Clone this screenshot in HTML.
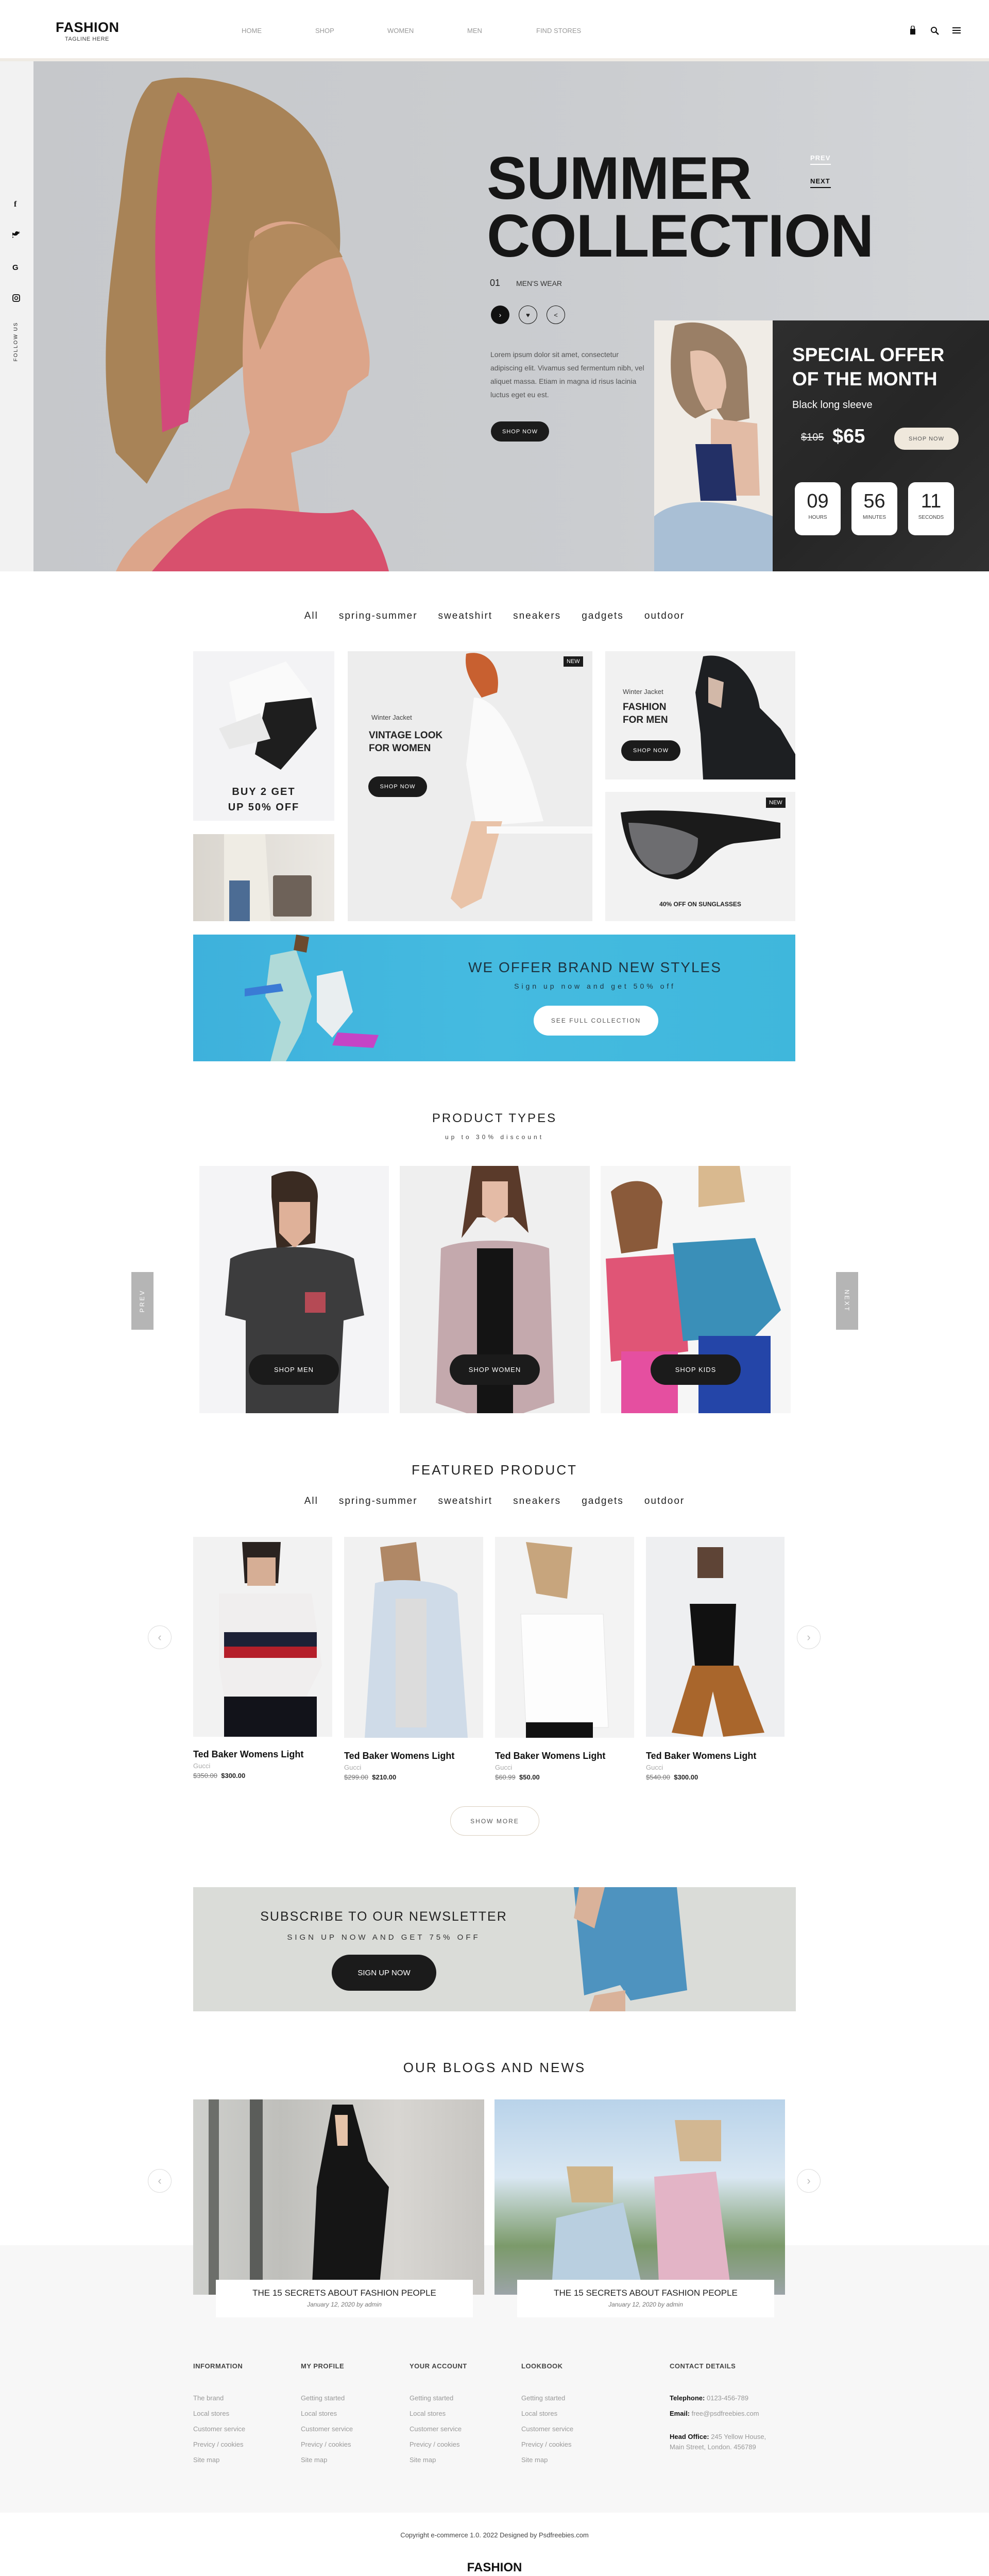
<!DOCTYPE html>
<html><head><meta charset="utf-8"><style>
*{margin:0;padding:0;box-sizing:border-box}
body{width:1920px;height:5050px;position:relative;background:#fff;font-family:"Liberation Sans",sans-serif;color:#222;overflow:hidden}
.a{position:absolute}
.c{text-align:center}
.btn{position:absolute;background:#1b1b1b;color:#fff;border-radius:22px;font-size:11px;letter-spacing:1px;display:flex;align-items:center;justify-content:center}
.tabs{position:absolute;left:0;width:1920px;display:flex;justify-content:center;gap:40px;font-size:19px;letter-spacing:2px;color:#222}
.h2{position:absolute;left:0;width:1920px;text-align:center;font-size:26px;letter-spacing:3px;color:#222}
.lnk{font-size:13px;color:#999;line-height:30px}
.fh{font-size:13px;font-weight:bold;color:#444;letter-spacing:.5px}
.new{position:absolute;background:#1b1b1b;color:#fff;font-size:11px;padding:4px 6px}
.ptitle{font-size:18px;font-weight:bold;color:#111}
.circ{position:absolute;width:46px;height:46px;border:1.5px solid #ddd;border-radius:50%;color:#bbb;font-size:22px;display:flex;align-items:center;justify-content:center}
</style></head><body>

<!-- header -->
<div class="a" style="left:108px;top:38px;font-size:27px;font-weight:bold;letter-spacing:.5px;color:#111">FASHION</div>
<div class="a" style="left:126px;top:70px;font-size:11px;color:#444;letter-spacing:.5px">TAGLINE HERE</div>
<div class="a" style="left:469px;top:52px;font-size:13px;color:#999">HOME</div>
<div class="a" style="left:612px;top:52px;font-size:13px;color:#999">SHOP</div>
<div class="a" style="left:752px;top:52px;font-size:13px;color:#999">WOMEN</div>
<div class="a" style="left:907px;top:52px;font-size:13px;color:#999">MEN</div>
<div class="a" style="left:1041px;top:52px;font-size:13px;color:#999">FIND STORES</div>
<svg class="a" style="left:1764px;top:50px" width="16" height="18"><path d="M3 6h10v11H3z" fill="#111"/><path d="M5 6V3a3 3 0 0 1 6 0v3" stroke="#111" fill="none" stroke-width="1.5"/></svg>
<svg class="a" style="left:1806px;top:51px" width="18" height="18"><circle cx="7" cy="7" r="5" stroke="#111" stroke-width="2" fill="none"/><path d="M11 11l5 5" stroke="#111" stroke-width="2.5"/></svg>
<svg class="a" style="left:1849px;top:52px" width="18" height="14"><path d="M0 2h16M0 7h16M0 12h16" stroke="#111" stroke-width="2"/></svg>
<div class="a" style="left:0;top:113px;width:1920px;height:6px;background:#efebe4"></div>

<!-- hero -->
<div class="a" style="left:0;top:119px;width:65px;height:990px;background:#f2f2f2"></div>
<div class="a" style="left:65px;top:119px;width:1855px;height:990px;background:linear-gradient(90deg,#c6c8cb,#cbcdd0 60%,#d3d5d8)"></div>
<svg class="a" style="left:65px;top:119px" width="900" height="990">
<path d="M230 40 C330 10 520 60 570 200 C610 320 600 420 560 470 L470 540 L300 680 L220 820 L160 760 C120 600 150 420 170 260 C180 160 190 80 230 40Z" fill="#a88357"/>
<path d="M280 60 C330 90 360 200 340 320 L300 700 L250 720 L240 500 C230 300 240 150 280 60Z" fill="#d2497b"/>
<path d="M430 330 C500 280 600 330 620 440 C640 520 660 560 650 610 L610 640 C600 680 590 720 560 740 L500 760 L520 900 C560 960 580 990 580 990 L160 990 C200 900 300 860 380 830 L420 720 C400 620 400 500 430 330Z" fill="#dca58a"/>
<path d="M420 350 C470 300 560 300 600 380 C560 380 500 420 470 500 L440 560 C420 480 410 420 420 350Z" fill="#b38a5e"/>
<path d="M380 870 C460 860 560 890 620 870 C660 900 680 950 690 990 L230 990 C280 930 330 880 380 870Z" fill="#d8506d"/>
</svg>
<svg class="a" style="left:24px;top:386px" width="16" height="210"><text x="3" y="15" font-size="16" font-weight="bold" fill="#111" font-family="Liberation Serif">f</text><path d="M1 70c4 2 8 2 10-2 2 0 3-2 4-3-1 0-2 1-3 1 1-1 2-2 2-3-1 1-2 1-3 1-2-2-6-1-6 3-3 0-6-2-8-4-1 2 0 4 1 5h-2c0 2 1 3 3 4H-1c1 2 3 2 4 2-1 1-3 2-4 2z" fill="#111"/><text x="0" y="138" font-size="15" font-weight="bold" fill="#111">G</text><rect x="1" y="186" width="13" height="13" rx="3" fill="none" stroke="#111" stroke-width="1.8"/><circle cx="7.5" cy="192.5" r="3" fill="none" stroke="#111" stroke-width="1.6"/></svg>
<div class="a" style="left:31px;top:663px;transform:translate(-50%,-50%) rotate(-90deg);font-size:10px;letter-spacing:2px;color:#222;white-space:nowrap">FOLLOW US</div>

<div class="a" style="left:945px;top:290px;font-size:117px;font-weight:bold;color:#161616;line-height:112px;letter-spacing:-1px">SUMMER<br>COLLECTION</div>
<div class="a" style="left:1573px;top:299px;font-size:13px;font-weight:bold;color:#fff;letter-spacing:1px">PREV</div>
<div class="a" style="left:1573px;top:318px;width:40px;height:2px;background:#fff"></div>
<div class="a" style="left:1573px;top:344px;font-size:13px;font-weight:bold;color:#111;letter-spacing:1px">NEXT</div>
<div class="a" style="left:1573px;top:363px;width:40px;height:2px;background:#111"></div>
<div class="a" style="left:951px;top:539px;font-size:18px;color:#222">01</div>
<div class="a" style="left:1002px;top:542px;font-size:14px;color:#333">MEN'S WEAR</div>
<div class="a" style="left:953px;top:593px;width:36px;height:36px;border-radius:50%;background:#111;color:#fff;font-size:14px;display:flex;align-items:center;justify-content:center">›</div>
<div class="a" style="left:1007px;top:593px;width:36px;height:36px;border-radius:50%;border:1.5px solid #111;font-size:13px;display:flex;align-items:center;justify-content:center">♥</div>
<div class="a" style="left:1061px;top:593px;width:36px;height:36px;border-radius:50%;border:1.5px solid #111;font-size:13px;display:flex;align-items:center;justify-content:center">&lt;</div>
<div class="a" style="left:952px;top:675px;width:300px;font-size:14px;line-height:26px;color:#555">Lorem ipsum dolor sit amet, consectetur adipiscing elit. Vivamus sed fermentum nibh, vel aliquet massa. Etiam in magna id risus lacinia luctus eget eu est.</div>
<div class="btn" style="left:953px;top:818px;width:113px;height:39px">SHOP NOW</div>

<div class="a" style="left:1270px;top:622px;width:230px;height:487px;background:#f0ece6;overflow:hidden">
<svg width="230" height="487"><path d="M40 10 C90 -10 170 20 180 90 L185 190 L140 200 L120 170 L80 190 C40 170 20 120 40 10Z" fill="#9a7f66"/><path d="M70 60 C110 50 140 80 140 130 L130 170 L100 175 C80 150 70 110 70 60Z" fill="#e6c2ad"/><path d="M110 190 L200 200 L205 340 L130 340 L110 250Z" fill="#e2bba5"/><path d="M80 240 L150 240 L160 350 L90 350Z" fill="#233066"/><path d="M0 380 C60 330 180 360 230 380 L230 487 L0 487Z" fill="#a9bfd5"/></svg></div>
<div class="a" style="left:1500px;top:622px;width:420px;height:487px;background:linear-gradient(135deg,#2e2e2e,#262626 50%,#303030)"></div>
<div class="a" style="left:1538px;top:665px;font-size:37px;font-weight:bold;color:#fff;line-height:47px">SPECIAL OFFER<br>OF THE MONTH</div>
<div class="a" style="left:1538px;top:775px;font-size:20px;color:#fff">Black long sleeve</div>
<div class="a" style="left:1555px;top:838px;font-size:20px;color:#eee;text-decoration:line-through">$105</div>
<div class="a" style="left:1616px;top:826px;font-size:38px;font-weight:bold;color:#fff">$65</div>
<div class="a" style="left:1736px;top:830px;width:125px;height:43px;border-radius:20px;background:#efe8dc;color:#555;font-size:11px;letter-spacing:1px;display:flex;align-items:center;justify-content:center">SHOP NOW</div>
<div class="a" style="left:1543px;top:936px;width:89px;height:103px;background:#fff;border-radius:14px;text-align:center"><div style="font-size:38px;margin-top:16px;color:#222">09</div><div style="font-size:10px;color:#444;margin-top:4px">HOURS</div></div>
<div class="a" style="left:1653px;top:936px;width:89px;height:103px;background:#fff;border-radius:14px;text-align:center"><div style="font-size:38px;margin-top:16px;color:#222">56</div><div style="font-size:10px;color:#444;margin-top:4px">MINUTES</div></div>
<div class="a" style="left:1763px;top:936px;width:89px;height:103px;background:#fff;border-radius:14px;text-align:center"><div style="font-size:38px;margin-top:16px;color:#222">11</div><div style="font-size:10px;color:#444;margin-top:4px">SECONDS</div></div>

<!-- category tabs -->
<div class="tabs" style="top:1185px"><span>All</span><span>spring-summer</span><span>sweatshirt</span><span>sneakers</span><span>gadgets</span><span>outdoor</span></div>

<!-- grid -->
<div class="a" style="left:375px;top:1264px;width:274px;height:329px;background:#f3f3f5"></div>
<svg class="a" style="left:375px;top:1264px" width="274" height="250"><path d="M70 60 L180 20 L240 100 L200 200 L90 170Z" fill="#fafafa"/><path d="M140 100 L230 90 L240 150 L170 230 L120 200Z" fill="#1e1e1e"/><path d="M50 150 L130 120 L150 170 L70 190Z" fill="#e8e8e8"/></svg>
<div class="a c" style="left:375px;top:1522px;width:274px;font-size:20px;font-weight:bold;letter-spacing:2px;line-height:30px;color:#222">BUY 2 GET<br>UP 50% OFF</div>
<div class="a" style="left:375px;top:1619px;width:274px;height:169px;background:linear-gradient(90deg,#d9d5ce,#ece9e4)"></div>
<svg class="a" style="left:375px;top:1619px" width="274" height="169"><path d="M60 0 L140 0 L150 169 L60 169Z" fill="#efece4"/><path d="M70 90 L110 90 L110 169 L70 169Z" fill="#4c6c94"/><rect x="155" y="80" width="75" height="80" rx="4" fill="#6e6259"/></svg>

<div class="a" style="left:675px;top:1264px;width:475px;height:524px;background:#ededed"></div>
<svg class="a" style="left:675px;top:1264px" width="475" height="524"><path d="M230 5 C270 -5 300 30 290 80 L260 90 C240 60 225 40 230 5Z" fill="#c86030"/><path d="M245 90 C300 90 340 200 360 260 L380 330 L250 340 L230 220Z" fill="#fafafa"/><path d="M240 330 L300 330 L260 480 L220 500 L200 480Z" fill="#e9c3a8"/><rect x="270" y="340" width="205" height="14" fill="#fafafa"/></svg>
<div class="a" style="left:721px;top:1385px;font-size:13px;color:#444">Winter Jacket</div>
<div class="a" style="left:716px;top:1415px;font-size:19px;font-weight:bold;color:#222;line-height:25px">VINTAGE LOOK<br>FOR WOMEN</div>
<div class="btn" style="left:715px;top:1507px;width:114px;height:40px">SHOP NOW</div>
<div class="new" style="left:1094px;top:1274px">NEW</div>

<div class="a" style="left:1175px;top:1264px;width:369px;height:249px;background:#f1f1f1"></div>
<svg class="a" style="left:1175px;top:1264px" width="369" height="249"><path d="M190 10 C240 0 290 40 300 110 L340 150 L369 200 L369 249 L190 249 L185 160 L175 80Z" fill="#1d1f22"/><path d="M200 50 L230 60 L225 110 L200 100Z" fill="#d2b8a8"/></svg>
<div class="a" style="left:1209px;top:1335px;font-size:13px;color:#444">Winter Jacket</div>
<div class="a" style="left:1209px;top:1360px;font-size:19px;font-weight:bold;color:#222;line-height:25px">FASHION<br>FOR MEN</div>
<div class="btn" style="left:1206px;top:1437px;width:115px;height:40px">SHOP NOW</div>

<div class="a" style="left:1175px;top:1537px;width:369px;height:251px;background:#f2f2f2"></div>
<svg class="a" style="left:1175px;top:1537px" width="369" height="251"><path d="M30 40 C100 30 220 40 340 60 L340 90 L250 100 C200 110 190 160 140 170 C80 165 40 130 30 40Z" fill="#1b1b1b"/><path d="M45 60 C90 60 150 70 180 90 C180 140 150 165 110 160 C70 150 50 110 45 60Z" fill="#6d6d70"/></svg>
<div class="new" style="left:1487px;top:1548px">NEW</div>
<div class="a c" style="left:1175px;top:1748px;width:369px;font-size:12px;font-weight:bold;color:#222">40% OFF ON SUNGLASSES</div>

<!-- blue banner -->
<div class="a" style="left:375px;top:1814px;width:1169px;height:246px;background:linear-gradient(90deg,#3eb1dc,#45bbe0 50%,#3fb7dc)"></div>
<svg class="a" style="left:375px;top:1814px" width="400" height="246"><path d="M150 40 L200 30 L230 120 L210 190 L180 246 L150 246 L170 170 L140 120Z" fill="#b0dad8"/><path d="M240 80 L290 70 L310 150 L270 200 L240 170Z" fill="#e9eef0"/><path d="M280 190 L360 195 L350 220 L270 215Z" fill="#c544c6"/><path d="M100 105 L170 95 L175 110 L100 120Z" fill="#3a7bd5"/><path d="M200 0 L225 5 L220 35 L195 30Z" fill="#6b4a2e"/></svg>
<div class="a c" style="left:725px;top:1862px;width:860px;font-size:28px;letter-spacing:2px;color:#1d3340">WE OFFER BRAND NEW STYLES</div>
<div class="a c" style="left:725px;top:1906px;width:860px;font-size:14px;letter-spacing:5px;color:#1d3340">Sign up now and get 50% off</div>
<div class="a" style="left:1036px;top:1952px;width:242px;height:58px;border-radius:29px;background:#fff;color:#555;font-size:12px;letter-spacing:2px;display:flex;align-items:center;justify-content:center">SEE FULL COLLECTION</div>

<!-- product types -->
<div class="h2" style="top:2157px;font-size:24px">PRODUCT TYPES</div>
<div class="a c" style="left:0;top:2200px;width:1920px;font-size:12px;letter-spacing:5px;color:#444">up to 30% discount</div>
<div class="a" style="left:255px;top:2469px;width:43px;height:112px;background:#b5b5b5"></div>
<div class="a" style="left:276px;top:2525px;transform:translate(-50%,-50%) rotate(-90deg);font-size:12px;letter-spacing:3px;color:#fff">PREV</div>
<div class="a" style="left:1623px;top:2469px;width:43px;height:112px;background:#b5b5b5"></div>
<div class="a" style="left:1644px;top:2525px;transform:translate(-50%,-50%) rotate(90deg);font-size:12px;letter-spacing:3px;color:#fff">NEXT</div>

<div class="a" style="left:387px;top:2263px;width:368px;height:480px;background:#f4f4f6;overflow:hidden"><svg width="368" height="480"><path d="M140 20 C180 0 230 10 230 60 L225 150 L150 160 L140 60Z" fill="#3a2b22"/><path d="M155 70 L215 70 L215 130 L185 160 L155 130Z" fill="#dfb199"/><path d="M60 180 C110 150 250 150 300 180 L320 290 L280 300 L270 480 L90 480 L90 300 L50 290Z" fill="#3c3c3d"/><rect x="205" y="245" width="40" height="40" fill="#b54a55"/></svg></div>
<div class="a" style="left:776px;top:2263px;width:369px;height:480px;background:#efefef;overflow:hidden"><svg width="369" height="480"><path d="M140 0 L230 0 L250 130 L220 100 L150 100 L120 140Z" fill="#5a3a2a"/><path d="M160 30 L210 30 L210 95 L185 110 L160 95Z" fill="#e4bba6"/><path d="M80 160 C120 140 240 140 290 160 L300 460 L240 480 L130 480 L70 460Z" fill="#c4a9ad"/><rect x="150" y="160" width="70" height="320" fill="#141414"/></svg></div>
<div class="a" style="left:1166px;top:2263px;width:369px;height:480px;background:#f6f6f6;overflow:hidden"><svg width="369" height="480"><path d="M20 50 C50 20 110 20 120 70 L110 160 L40 170Z" fill="#8a5a3a"/><path d="M190 0 L270 0 L280 70 L190 80Z" fill="#d9b98f"/><path d="M10 180 L160 170 L170 360 L20 380Z" fill="#e05576"/><path d="M140 150 L300 140 L350 280 L300 330 L160 340Z" fill="#3a8fb8"/><rect x="190" y="330" width="140" height="150" fill="#2445a8"/><rect x="40" y="360" width="110" height="120" fill="#e54fa0"/></svg></div>
<div class="btn" style="left:483px;top:2629px;width:175px;height:59px;border-radius:30px;font-size:13px">SHOP MEN</div>
<div class="btn" style="left:873px;top:2629px;width:175px;height:59px;border-radius:30px;font-size:13px">SHOP WOMEN</div>
<div class="btn" style="left:1263px;top:2629px;width:175px;height:59px;border-radius:30px;font-size:13px">SHOP KIDS</div>

<!-- featured -->
<div class="h2" style="top:2838px;font-size:26px">FEATURED PRODUCT</div>
<div class="tabs" style="top:2903px;font-size:19px"><span>All</span><span>spring-summer</span><span>sweatshirt</span><span>sneakers</span><span>gadgets</span><span>outdoor</span></div>
<div class="circ" style="left:287px;top:3155px">‹</div>
<div class="circ" style="left:1547px;top:3155px">›</div>

<div class="a" style="left:375px;top:2983px;width:270px;height:388px;background:#f2f2f2;overflow:hidden"><svg width="270" height="388"><path d="M95 10 L170 10 L165 90 L100 90Z" fill="#2a2320"/><path d="M105 40 L160 40 L160 95 L105 95Z" fill="#d6ae95"/><path d="M50 110 L230 110 L250 250 L220 310 L60 310 L50 250Z" fill="#f0eeee"/><rect x="60" y="185" width="180" height="28" fill="#1d2136"/><rect x="60" y="213" width="180" height="22" fill="#b51f2a"/><rect x="60" y="310" width="180" height="78" fill="#12131a"/></svg></div>
<div class="a" style="left:668px;top:2983px;width:270px;height:390px;background:#f1f1f1;overflow:hidden"><svg width="270" height="390"><path d="M70 20 L140 10 L150 100 L80 110Z" fill="#b08866"/><path d="M60 90 C90 80 190 80 220 110 L240 390 L40 390Z" fill="#cfdbe8"/><rect x="100" y="120" width="60" height="250" fill="#dcdcdc"/></svg></div>
<div class="a" style="left:961px;top:2983px;width:270px;height:390px;background:#f3f3f3;overflow:hidden"><svg width="270" height="390"><path d="M60 10 L150 20 L140 120 L80 110Z" fill="#c7a57d"/><path d="M50 150 L210 150 L220 370 L60 370Z" fill="#fdfdfd" stroke="#e4e4e4"/><rect x="60" y="360" width="130" height="30" fill="#111"/></svg></div>
<div class="a" style="left:1254px;top:2983px;width:269px;height:388px;background:#eeeff1;overflow:hidden"><svg width="269" height="388"><path d="M100 20 L150 20 L150 80 L100 80Z" fill="#5e4436"/><path d="M85 130 L175 130 L170 250 L95 250Z" fill="#111"/><path d="M90 250 L180 250 L230 380 L150 388 L130 300 L110 388 L50 380Z" fill="#a9662c"/></svg></div>

<div class="a ptitle" style="left:375px;top:3395px">Ted Baker Womens Light</div>
<div class="a" style="left:375px;top:3420px;font-size:13px;color:#aaa">Gucci</div>
<div class="a" style="left:375px;top:3439px;font-size:13px"><s style="color:#777">$350.00</s> &nbsp;<b>$300.00</b></div>
<div class="a ptitle" style="left:668px;top:3398px">Ted Baker Womens Light</div>
<div class="a" style="left:668px;top:3423px;font-size:13px;color:#aaa">Gucci</div>
<div class="a" style="left:668px;top:3442px;font-size:13px"><s style="color:#777">$299.00</s> &nbsp;<b>$210.00</b></div>
<div class="a ptitle" style="left:961px;top:3398px">Ted Baker Womens Light</div>
<div class="a" style="left:961px;top:3423px;font-size:13px;color:#aaa">Gucci</div>
<div class="a" style="left:961px;top:3442px;font-size:13px"><s style="color:#777">$60.99</s> &nbsp;<b>$50.00</b></div>
<div class="a ptitle" style="left:1254px;top:3398px">Ted Baker Womens Light</div>
<div class="a" style="left:1254px;top:3423px;font-size:13px;color:#aaa">Gucci</div>
<div class="a" style="left:1254px;top:3442px;font-size:13px"><s style="color:#777">$540.00</s> &nbsp;<b>$300.00</b></div>
<div class="a" style="left:874px;top:3506px;width:173px;height:57px;border-radius:29px;border:1.5px solid #d9cfbf;color:#555;font-size:12px;letter-spacing:2px;display:flex;align-items:center;justify-content:center">SHOW MORE</div>

<!-- newsletter -->
<div class="a" style="left:375px;top:3663px;width:1170px;height:241px;background:#dadcd8"></div>
<svg class="a" style="left:1094px;top:3663px" width="303" height="241"><path d="M20 0 L220 0 L240 200 L130 220 L110 190 L40 210 Z" fill="#4e93bf"/><path d="M30 0 L80 0 L60 80 L20 60Z" fill="#d9b29a"/><path d="M60 210 L120 200 L120 241 L50 241Z" fill="#d9b29a"/></svg>
<div class="a c" style="left:375px;top:3706px;width:740px;font-size:25px;letter-spacing:2px;color:#222">SUBSCRIBE TO OUR NEWSLETTER</div>
<div class="a c" style="left:375px;top:3752px;width:740px;font-size:15px;letter-spacing:5px;color:#333">SIGN UP NOW AND GET 75% OFF</div>
<div class="btn" style="left:644px;top:3794px;width:203px;height:70px;border-radius:35px;font-size:15px;letter-spacing:0">SIGN UP NOW</div>

<!-- blogs -->
<div class="h2" style="top:3998px;font-size:26px">OUR BLOGS AND NEWS</div>
<div class="a" style="left:0;top:4358px;width:1920px;height:519px;background:#f7f7f7"></div>
<div class="a" style="left:375px;top:4075px;width:565px;height:379px;background:linear-gradient(90deg,#cfd0cd,#bfbfbb 30%,#d8d6d2 70%,#c7c5c1);overflow:hidden"><svg width="565" height="379"><rect x="30" y="0" width="20" height="379" fill="#6c6e6a"/><rect x="110" y="0" width="25" height="379" fill="#5b5d5a"/><path d="M270 10 L310 10 L340 120 L380 170 L360 379 L230 379 L240 170Z" fill="#151515"/><path d="M275 30 L300 30 L300 90 L280 90Z" fill="#e5c3a9"/></svg></div>
<div class="a" style="left:960px;top:4075px;width:564px;height:379px;background:linear-gradient(180deg,#b9d3ea,#d9e7f2 40%,#7b9a6a 75%,#9ca4a8);overflow:hidden"><svg width="564" height="379"><path d="M120 230 L250 200 L290 379 L110 379Z" fill="#b9cfe0"/><path d="M310 150 L430 140 L460 379 L320 379Z" fill="#e3b4c6"/><path d="M350 40 L440 40 L440 120 L360 120Z" fill="#d2b792"/><path d="M140 130 L230 130 L230 200 L150 200Z" fill="#cfb489"/></svg></div>
<div class="circ" style="left:287px;top:4210px">‹</div>
<div class="circ" style="left:1547px;top:4210px">›</div>
<div class="a" style="left:419px;top:4425px;width:499px;height:73px;background:#fff"></div>
<div class="a c" style="left:419px;top:4441px;width:499px;font-size:17px;color:#222">THE 15 SECRETS ABOUT FASHION PEOPLE</div>
<div class="a c" style="left:419px;top:4466px;width:499px;font-size:12px;font-style:italic;color:#777">January 12, 2020 by admin</div>
<div class="a" style="left:1004px;top:4425px;width:499px;height:73px;background:#fff"></div>
<div class="a c" style="left:1004px;top:4441px;width:499px;font-size:17px;color:#222">THE 15 SECRETS ABOUT FASHION PEOPLE</div>
<div class="a c" style="left:1004px;top:4466px;width:499px;font-size:12px;font-style:italic;color:#777">January 12, 2020 by admin</div>

<!-- footer -->
<div class="a" style="left:375px;top:4585px"><div class="fh">INFORMATION</div><div style="margin-top:40px" class="lnk">The brand<br>Local stores<br>Customer service<br>Previcy / cookies<br>Site map</div></div>
<div class="a" style="left:584px;top:4585px"><div class="fh">MY PROFILE</div><div style="margin-top:40px" class="lnk">Getting started<br>Local stores<br>Customer service<br>Previcy / cookies<br>Site map</div></div>
<div class="a" style="left:795px;top:4585px"><div class="fh">YOUR ACCOUNT</div><div style="margin-top:40px" class="lnk">Getting started<br>Local stores<br>Customer service<br>Previcy / cookies<br>Site map</div></div>
<div class="a" style="left:1012px;top:4585px"><div class="fh">LOOKBOOK</div><div style="margin-top:40px" class="lnk">Getting started<br>Local stores<br>Customer service<br>Previcy / cookies<br>Site map</div></div>
<div class="a" style="left:1300px;top:4585px"><div class="fh">CONTACT DETAILS</div>
<div style="margin-top:40px;font-size:13px;color:#999;line-height:30px"><b style="color:#111">Telephone:</b> 0123-456-789<br><b style="color:#111">Email:</b> free@psdfreebies.com</div>
<div style="margin-top:20px;font-size:13px;color:#999;line-height:20px"><b style="color:#111">Head Office:</b> 245 Yellow House,<br>Main Street, London. 456789</div></div>
<div class="a c" style="left:0;top:4913px;width:1920px;font-size:13px;color:#444">Copyright e-commerce 1.0. 2022 Designed by Psdfreebies.com</div>
<div class="a c" style="left:0;top:4970px;width:1920px;font-size:24px;font-weight:bold;color:#111">FASHION</div>
<div class="a c" style="left:0;top:5001px;width:1920px;font-size:11px;color:#444">TAGLINE HERE</div>
</body></html>
